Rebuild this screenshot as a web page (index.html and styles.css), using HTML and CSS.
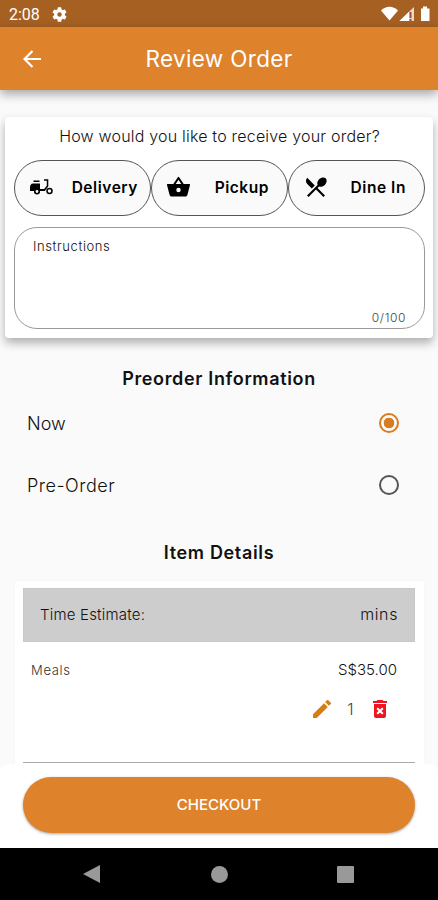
FILE: index.html
```html
<!DOCTYPE html>
<html lang="en">
<head>
  <meta charset="UTF-8" />
  <title>Review Order</title>
  <meta name="viewport" content="width=device-width, initial-scale=1.0"/>
  <link rel="stylesheet" href="styles.css">
</head>
<body>

  <div class="status-bar">
    <span class="time">2:08</span>
    <svg class="gear" width="15" height="15" viewBox="2 2 20 20"><path fill="#fff" d="M19.14 12.94c.04-.3.06-.61.06-.94s-.02-.64-.07-.94l2.03-1.58a.49.49 0 0 0 .12-.61l-1.92-3.32a.49.49 0 0 0-.59-.22l-2.39.96a7 7 0 0 0-1.62-.94l-.36-2.54a.48.48 0 0 0-.48-.41h-3.84a.48.48 0 0 0-.47.41l-.36 2.54a7 7 0 0 0-1.62.94l-2.39-.96a.49.49 0 0 0-.59.22L2.74 8.87a.48.48 0 0 0 .12.61l2.03 1.58a6 6 0 0 0 0 1.88l-2.03 1.58a.49.49 0 0 0-.12.61l1.92 3.32c.12.22.37.29.59.22l2.39-.96c.5.38 1.03.7 1.62.94l.36 2.54c.05.24.24.41.48.41h3.84c.24 0 .44-.17.47-.41l.36-2.54a7 7 0 0 0 1.62-.94l2.39.96c.22.08.47 0 .59-.22l1.92-3.32a.48.48 0 0 0-.12-.61zM12 15a3 3 0 1 1 0-6 3 3 0 0 1 0 6z"/></svg>
    <svg class="signals" width="50" height="16" viewBox="0 0 50 16">
      <path fill="#fff" d="M0 4.500C5-.4 12-.4 17 4.500L8.500 14.500z"/>
      <path fill="#ead8cb" d="M18.500 15L33 1v14z"/>
      <path fill="#fff" d="M18.500 15L28 5.800V15z"/>
      <path fill="#a64d35" d="M28.500 6h2v6h-2zM28.500 13h2v2h-2z"/>
      <path fill="#fff" d="M40 2.500h2V.500h4v2h2.500V15H40z"/>
    </svg>
  </div>

  <header>
    <svg class="back" width="18" height="18" viewBox="0 0 18 18"><path d="M18 9H1.500M9.500 1L1.500 9l8 8" fill="none" stroke="#fff" stroke-width="2.200"/></svg>
    <h1>Review Order</h1>
  </header>

  <main>
    <section class="receive">
      <p class="question">How would you like to receive your order?</p>
      <div class="options">
        <button class="option delivery">
          <svg width="24" height="24" viewBox="0 0 24 24">
            <path d="M4.500 5.500h6V7h-6zM4 8.500h7V14h4.200l2.600-3.200V5.700H15V4.200h4.300v7.100L15.800 16H11a3 3 0 0 1-6 0H1v-3c0-3 1-4.500 3-4.500z"/>
            <circle cx="8" cy="16.500" r="2.200" fill="#fafafa" stroke="#000" stroke-width="1.500"/>
            <circle cx="20.500" cy="16" r="2.500" fill="none" stroke="#000" stroke-width="1.500"/>
          </svg>
          <span>Delivery</span>
        </button>
        <button class="option">
          <svg width="25" height="24" viewBox="0 0 24 24"><path fill-rule="evenodd" d="M17.200 9L12.830 2.440a1 1 0 0 0-1.660 0L6.800 9H1.200c-.5 0-.8.500-.7 1l2.600 10c.3.900 1 1.500 1.900 1.500h14c.9 0 1.600-.6 1.900-1.500l2.600-10c.1-.5-.2-1-.7-1zM9.200 9L12 4.800 14.800 9zM12 17.200a2.200 2.200 0 1 1 0-4.400 2.200 2.200 0 0 1 0 4.400z"/></svg>
          <span>Pickup</span>
        </button>
        <button class="option">
          <svg width="26" height="26" viewBox="0 0 24 24"><path d="M8.100 13.340l2.830-2.830L3.910 3.500a4 4 0 0 0 0 5.660zm6.780-1.810c1.530.71 3.680.21 5.270-1.380 1.910-1.910 2.280-4.650.81-6.120-1.460-1.460-4.200-1.100-6.120.81-1.590 1.590-2.090 3.740-1.380 5.270L3.700 19.870l1.410 1.410L12 14.410l6.880 6.880 1.410-1.410L13.410 13z"/></svg>
          <span>Dine In</span>
        </button>
      </div>
      <div class="instructions">
        <span class="label">Instructions</span>
        <span class="counter">0/100</span>
      </div>
    </section>

    <section class="preorder">
      <h2>Preorder Information</h2>
      <div class="choice">
        <span>Now</span>
        <span class="radio checked"></span>
      </div>
      <div class="choice">
        <span class="later">Pre-Order</span>
        <span class="radio"></span>
      </div>
    </section>

    <h2 class="details-title">Item Details</h2>
    <section class="items">
      <div class="estimate">
        <span>Time Estimate:</span>
        <span class="mins">mins</span>
      </div>
      <div class="item">
        <span class="name">Meals</span>
        <span class="price">S$35.00</span>
      </div>
      <div class="actions">
        <svg width="18" height="18" viewBox="3 3 18 18"><path fill="#d97c12" d="M3 17.250V21h3.750L17.810 9.940l-3.750-3.750zM20.710 7.040a1 1 0 0 0 0-1.410l-2.340-2.340a1 1 0 0 0-1.410 0l-1.830 1.830 3.750 3.750z"/></svg>
        <span class="qty">1</span>
        <svg width="14" height="18" viewBox="5 3 14 18"><path fill="#ee1422" fill-rule="evenodd" d="M6 19c0 1.100.9 2 2 2h8a2 2 0 0 0 2-2V7H6zM9.880 10.460L12 12.590l2.120-2.120 1.410 1.410L13.410 14l2.120 2.120-1.410 1.410L12 15.410l-2.120 2.120-1.410-1.410L10.590 14l-2.120-2.120zM15.500 4l-1-1h-5l-1 1H5v2h14V4z"/></svg>
      </div>
    </section>
  </main>

  <footer>
    <button class="checkout">CHECKOUT</button>
  </footer>

  <nav>
    <svg width="18" height="20" viewBox="0 0 18 20"><path fill="#999" d="M0 10L17 1v18z"/></svg>
    <span class="home"></span>
    <span class="recent"></span>
  </nav>

</body>
</html>
```
FILE: styles.css
```css
* {
  box-sizing: border-box;
}

body {
  margin: 0;
  height: 900px;
  display: flex;
  flex-direction: column;
  overflow: hidden;
  font-family: Inter, "Open Sans", sans-serif;
  background-color: #fafafa;
  color: #111;
}

h1, h2, p {
  margin: 0;
}

svg {
  display: block;
  flex-shrink: 0;
}

button {
  font-family: inherit;
  cursor: pointer;
}

.status-bar {
  height: 27px;
  flex-shrink: 0;
  display: flex;
  align-items: center;
  padding: 1px 7px 0 9px;
  background-color: #a66022;
  color: #fff;
}

.time {
  width: 43px;
  font-family: Roboto, sans-serif;
  font-size: 16px;
}

.signals {
  margin-left: auto;
}

header {
  height: 63px;
  flex-shrink: 0;
  display: grid;
  grid-template-columns: 60px 1fr 60px;
  align-items: center;
  background-color: #de822c;
  color: #fff;
  box-shadow: 0 4px 10px rgba(0,0,0,0.35);
}

.back {
  margin-left: 23px;
}

h1 {
  font-size: 22.5px;
  font-weight: 400;
  letter-spacing: 0.35px;
  line-height: 28px;
  text-align: center;
}

main {
  flex: 1;
  min-height: 0;
  padding-top: 27px;
  overflow: hidden;
}

header, footer {
  position: relative;
}

.receive {
  height: 221px;
  margin: 0 5px;
  padding: 9px 8px 0 9px;
  background: #fff;
  border-radius: 4px;
  box-shadow: 0 5px 10px rgba(0,0,0,0.3);
}

.question {
  height: 34px;
  line-height: 21px;
  font-size: 16px;
  font-weight: 300;
  letter-spacing: 0.2px;
  text-align: center;
  white-space: nowrap;
}

.options {
  display: grid;
  grid-template-columns: repeat(3, 1fr);
}

.option {
  height: 56px;
  display: flex;
  align-items: center;
  justify-content: space-between;
  padding: 0 18px 2px 14px;
  background: #fafafa;
  border: 1px solid #555;
  border-radius: 28px;
  color: #000;
  font-size: 15.5px;
  font-weight: 600;
  letter-spacing: 0.55px;
  white-space: nowrap;
}

.delivery {
  padding-right: 12px;
}

.instructions {
  height: 102px;
  margin-top: 11px;
  padding: 10px 18px 2px;
  display: flex;
  flex-direction: column;
  justify-content: space-between;
  border: 1px solid #999;
  border-radius: 23px;
  font-size: 13px;
  font-weight: 300;
  line-height: 17px;
  letter-spacing: 0.6px;
}

.counter {
  align-self: flex-end;
  font-size: 12px;
  color: #444;
}

h2 {
  height: 24px;
  line-height: 24px;
  font-size: 18px;
  font-weight: 600;
  letter-spacing: 0.65px;
  text-align: center;
}

.preorder {
  padding-top: 29px;
}

.choice {
  height: 62px;
  display: flex;
  align-items: center;
  justify-content: space-between;
  padding: 2px 39px 0 27px;
  font-size: 18px;
  font-weight: 300;
}

.later {
  letter-spacing: 0.5px;
}

.radio {
  width: 20px;
  height: 20px;
  border: 2px solid #555;
  border-radius: 50%;
}

.radio.checked {
  border-color: #d97c20;
  background: radial-gradient(circle, #d97c20 5px, transparent 5.600px);
}

.details-title {
  margin-top: 26px;
}

.items {
  height: 220px;
  margin: 16px 14px 0 15px;
  padding: 7px 9px 0 8px;
  background: #fff;
  box-shadow: 0 0 3px rgba(0,0,0,0.04);
}

.estimate {
  height: 54px;
  display: flex;
  align-items: center;
  justify-content: space-between;
  padding: 0 16px 2px;
  background: #cdcdcd;
  border: 1px solid #c8c8c8;
  font-size: 15px;
  font-weight: 300;
  letter-spacing: 0.2px;
}

.mins {
  font-size: 16px;
  letter-spacing: 0.6px;
}

.item {
  height: 55px;
  display: flex;
  align-items: center;
  justify-content: space-between;
  padding: 0 18px 0 8px;
  font-size: 13px;
  font-weight: 300;
}

.name {
  letter-spacing: 0.7px;
  color: #333;
}

.price {
  font-size: 15px;
}

.actions {
  height: 66px;
  display: flex;
  align-items: flex-start;
  justify-content: flex-end;
  padding: 3px 28px 0 0;
  border-bottom: 1px solid #aaa;
}

.qty {
  width: 42px;
  padding-right: 3px;
  line-height: 18px;
  text-align: center;
  font-size: 16px;
  font-weight: 300;
  color: #444;
}

footer {
  height: 84px;
  flex-shrink: 0;
  padding: 13px 23px;
  background: #fff;
  border-radius: 8px 8px 0 0;
}

.checkout {
  display: block;
  width: 100%;
  height: 56px;
  padding: 0 0 2px;
  border: none;
  border-radius: 28px;
  background: #de822c;
  color: #fff;
  font-size: 15px;
  font-weight: 500;
  box-shadow: 0 1px 3px rgba(0,0,0,0.35);
}

nav {
  height: 52px;
  flex-shrink: 0;
  display: flex;
  align-items: center;
  justify-content: space-between;
  padding: 0 84px 0 83px;
  background: #000;
}

.home, .recent {
  width: 17px;
  height: 17px;
  background: #999;
}

.home {
  border-radius: 50%;
}

.recent {
  border-radius: 1px;
}
```
